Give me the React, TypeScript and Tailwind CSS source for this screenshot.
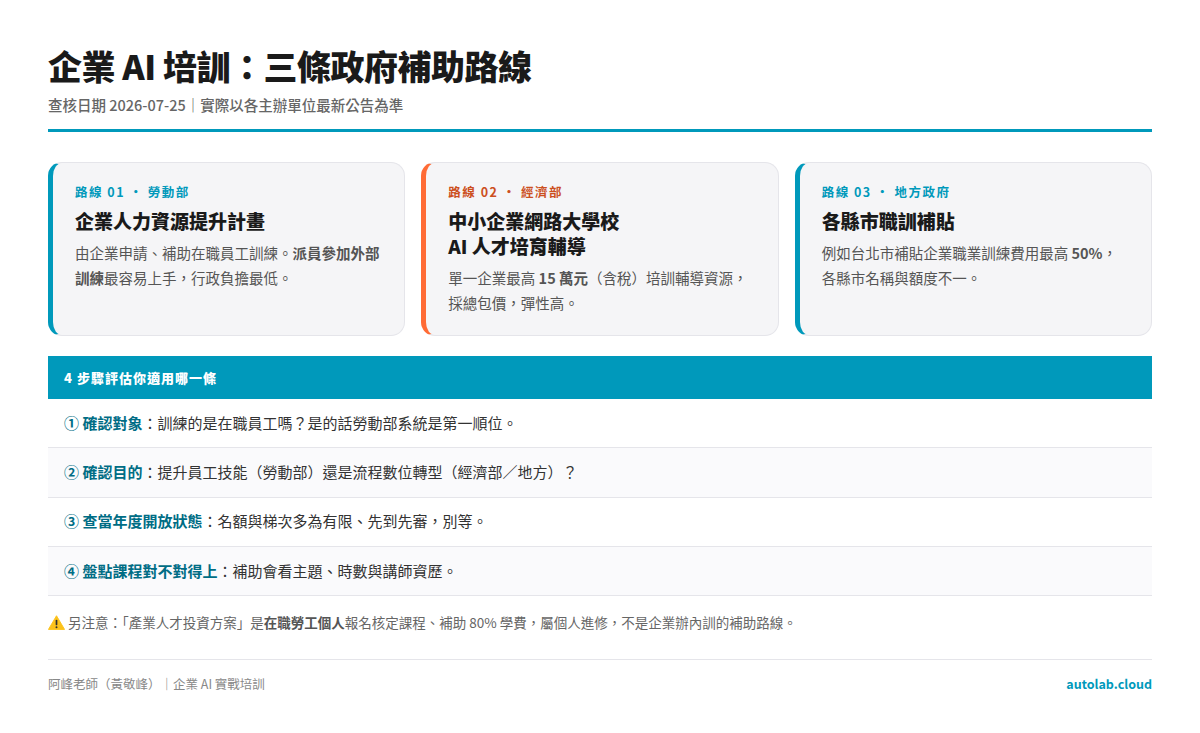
const font = { fontFamily: '"Noto Sans CJK TC", "Noto Sans", sans-serif' };

const routes = [
  {
    border: "border-l-[#0099bb]",
    tagColor: "text-[#0099bb]",
    tag: "路線 01 · 勞動部",
    title: <>企業人力資源提升計畫</>,
    body: (
      <>
        由企業申請、補助在職員工訓練。<strong className="font-bold">派員參加外部訓練</strong>最容易上手&#xFF0C;行政負擔最低。
      </>
    ),
  },
  {
    border: "border-l-[#ff6b35]",
    tagColor: "text-[#cc4f1e]",
    tag: "路線 02 · 經濟部",
    title: (
      <>
        中小企業網路大學校
        <br />
        AI 人才培育輔導
      </>
    ),
    body: (
      <>
        單一企業最高 <strong className="font-bold">15 萬元</strong>&#xFF08;含稅&#xFF09;培訓輔導資源&#xFF0C;採總包價&#xFF0C;彈性高。
      </>
    ),
  },
  {
    border: "border-l-[#0099bb]",
    tagColor: "text-[#0099bb]",
    tag: "路線 03 · 地方政府",
    title: <>各縣市職訓補貼</>,
    body: (
      <>
        例如台北市補貼企業職業訓練費用最高 <strong className="font-bold">50%</strong>&#xFF0C;
        <br />
        各縣市名稱與額度不一。
      </>
    ),
  },
];

const steps = [
  { key: "① 確認對象", text: "\uFF1A訓練的是在職員工嗎\uFF1F是的話勞動部系統是第一順位。" },
  { key: "② 確認目的", text: "\uFF1A提升員工技能\uFF08勞動部\uFF09還是流程數位轉型\uFF08經濟部\uFF0F地方\uFF09\uFF1F" },
  { key: "③ 查當年度開放狀態", text: "\uFF1A名額與梯次多為有限、先到先審\uFF0C別等。" },
  { key: "④ 盤點課程對不對得上", text: "\uFF1A補助會看主題、時數與講師資歷。" },
];

function WarningIcon() {
  return (
    <svg viewBox="0 0 18 16" className="h-[15px] w-[17px] shrink-0" aria-hidden="true">
      <path d="M9 .8 17.6 15.4H.4Z" fill="#fcc21b" stroke="#fcc21b" strokeLinejoin="round" />
      <rect x="8.1" y="5" width="1.8" height="6" rx=".9" fill="#2f2f2f" />
      <circle cx="9" cy="13" r="1.05" fill="#2f2f2f" />
    </svg>
  );
}

export default function App() {
  return (
    <div lang="zh-Hant" style={font} className="flex h-[733px] w-[1200px] flex-col bg-white px-12 pt-[40px] text-[#1a1a1a]">
      <header className="border-b-[3px] border-[#0099bb] pb-[12px]">
        <h1 className="text-[34px] font-black leading-[52px] tracking-[-0.5px]">企業 AI 培訓&#xFF1A;三條政府補助路線</h1>
        <p className="mt-[1px] text-[14.5px] font-medium leading-[24px] text-[#666666]">
          查核日期 2026-07-25&#xFF5C;實際以各主辦單位最新公告為準
        </p>
      </header>

      <section className="mt-[30px] grid grid-cols-3 gap-4">
        {routes.map((r) => (
          <div
            key={r.tag}
            className={`h-[174px] rounded-[14px] border border-[#e5e5ea] border-l-[5px] bg-[#f5f5f7] pl-[22px] pr-[22px] pt-[20px] ${r.border}`}
          >
            <div className={`text-[12.5px] font-bold leading-[18px] tracking-[1.5px] ${r.tagColor}`}>{r.tag}</div>
            <h3 className="mt-[7px] text-[19px] font-extrabold leading-[25px] text-[#1a1a1a]">{r.title}</h3>
            <p className="mt-[7px] text-[14.5px] leading-[25px] text-[#555555]">{r.body}</p>
          </div>
        ))}
      </section>

      <section className="mt-[20px]">
        <div className="flex h-[43px] items-center bg-[#0099bb] px-4 text-[13px] font-black tracking-[1px] text-white">
          4 步驟評估你適用哪一條
        </div>
        {steps.map((s, i) => (
          <div
            key={s.key}
            className={`flex h-[49.3px] items-center border-b border-[#e5e5ea] px-4 text-[15px] text-[#333333] ${i % 2 === 1 ? "bg-[#fafafc]" : "bg-white"}`}
          >
            <strong className="font-bold text-[#006d85]">{s.key}</strong>
            {s.text}
          </div>
        ))}
      </section>

      <p className="mt-[16px] flex items-center text-[13.5px] leading-[20px] text-[#666666]">
        <WarningIcon />
        <span className="ml-[3px]">
          另注意&#xFF1A;「產業人才投資方案」是<strong className="font-bold text-[#555555]">在職勞工個人</strong>報名核定課程、補助 80% 學費&#xFF0C;屬個人進修&#xFF0C;不是企業辦內訓的補助路線。
        </span>
      </p>

      <footer className="mt-[27px] flex items-center justify-between border-t border-[#e5e5ea] pt-[15px] text-[12.5px] leading-[18px] text-[#888888]">
        <span>阿峰老師&#xFF08;黃敬峰&#xFF09;&#xFF5C;企業 AI 實戰培訓</span>
        <span className="font-bold text-[#0099bb]">autolab.cloud</span>
      </footer>
    </div>
  );
}
